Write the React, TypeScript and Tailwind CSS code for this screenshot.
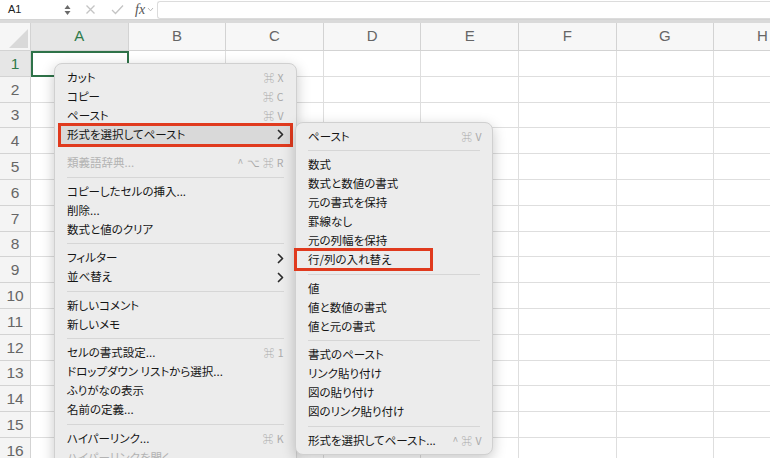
import React from "react";

type Entry =
  | { kind: "item"; label: string; shortcut?: string; arrow?: boolean; disabled?: boolean; active?: boolean }
  | { kind: "sep"; line?: boolean };

const COLS = ["A", "B", "C", "D", "E", "F", "G", "H"];
const ROWS = Array.from({ length: 17 }, (_, i) => i + 1);

const mainMenu: Entry[] = [
  { kind: "item", label: "カット", shortcut: "⌘ X" },
  { kind: "item", label: "コピー", shortcut: "⌘ C" },
  { kind: "item", label: "ペースト", shortcut: "⌘ V" },
  { kind: "item", label: "形式を選択してペースト", arrow: true, active: true },
  { kind: "sep", line: false },
  { kind: "item", label: "類義語辞典...", shortcut: "^ ⌥ ⌘ R", disabled: true },
  { kind: "sep" },
  { kind: "item", label: "コピーしたセルの挿入..." },
  { kind: "item", label: "削除..." },
  { kind: "item", label: "数式と値のクリア" },
  { kind: "sep" },
  { kind: "item", label: "フィルター", arrow: true },
  { kind: "item", label: "並べ替え", arrow: true },
  { kind: "sep" },
  { kind: "item", label: "新しいコメント" },
  { kind: "item", label: "新しいメモ" },
  { kind: "sep" },
  { kind: "item", label: "セルの書式設定...", shortcut: "⌘ 1" },
  { kind: "item", label: "ドロップダウン リストから選択..." },
  { kind: "item", label: "ふりがなの表示" },
  { kind: "item", label: "名前の定義..." },
  { kind: "sep" },
  { kind: "item", label: "ハイパーリンク...", shortcut: "⌘ K" },
  { kind: "item", label: "ハイパーリンクを開く", disabled: true },
];

const pasteMenu: Entry[] = [
  { kind: "item", label: "ペースト", shortcut: "⌘ V" },
  { kind: "sep" },
  { kind: "item", label: "数式" },
  { kind: "item", label: "数式と数値の書式" },
  { kind: "item", label: "元の書式を保持" },
  { kind: "item", label: "罫線なし" },
  { kind: "item", label: "元の列幅を保持" },
  { kind: "item", label: "行/列の入れ替え" },
  { kind: "sep" },
  { kind: "item", label: "値" },
  { kind: "item", label: "値と数値の書式" },
  { kind: "item", label: "値と元の書式" },
  { kind: "sep" },
  { kind: "item", label: "書式のペースト" },
  { kind: "item", label: "リンク貼り付け" },
  { kind: "item", label: "図の貼り付け" },
  { kind: "item", label: "図のリンク貼り付け" },
  { kind: "sep" },
  { kind: "item", label: "形式を選択してペースト...", shortcut: "^ ⌘ V" },
];

function Chevron() {
  return (
    <svg width="7" height="11" viewBox="0 0 7 11" className="shrink-0">
      <path d="M1.5 1.5 L5.5 5.5 L1.5 9.5" fill="none" stroke="#2a2a2a" strokeWidth="1.7" strokeLinecap="round" strokeLinejoin="round" />
    </svg>
  );
}

function MenuList({ entries, padR }: { entries: Entry[]; padR: string }) {
  return (
    <>
      {entries.map((e, i) =>
        e.kind === "sep" ? (
          <div key={i} className="flex h-[9.5px] items-center px-3">
            {e.line !== false && <div className="h-px w-full bg-[#d6d6d6]" />}
          </div>
        ) : (
          <div
            key={i}
            className={`mx-[3px] flex h-[19px] items-center justify-between rounded-[4px] pl-[9px] ${padR} ${
              e.active ? "bg-[#d9d9d9]" : ""
            }`}
          >
            <span className={e.disabled ? "text-[#b3b3b3]" : "text-[#151515]"}>{e.label}</span>
            {e.shortcut && <span className="text-[10.5px] tracking-[0.5px] text-[#aaaaaa]">{e.shortcut}</span>}
            {e.arrow && <Chevron />}
          </div>
        )
      )}
    </>
  );
}

export default function App() {
  return (
    <div className="relative h-[458px] w-[770px] overflow-hidden bg-white font-['Noto_Sans_CJK_JP','Liberation_Sans',sans-serif]">
      {/* formula bar */}
      <div className="flex h-[20px] items-center border-b border-[#d4d4d4] bg-white">
        <div className="flex h-full w-[76px] items-center justify-between pl-[8px] pr-[5px]">
          <span className="font-['Liberation_Sans',sans-serif] text-[11px] text-[#222]">A1</span>
          <svg width="7" height="12" viewBox="0 0 7 12">
            <path d="M3.5 1 L6.5 5 L0.5 5 Z" fill="#6a6a6a" />
            <path d="M3.5 11 L6.5 7 L0.5 7 Z" fill="#6a6a6a" />
          </svg>
        </div>
        <div className="flex h-full items-center pl-[9px]">
          <svg width="11" height="11" viewBox="0 0 11 11">
            <path d="M1.5 1.5 L9.5 9.5 M9.5 1.5 L1.5 9.5" stroke="#c4c4c4" strokeWidth="1.3" />
          </svg>
          <svg width="13" height="11" viewBox="0 0 13 11" className="ml-[15px]">
            <path d="M1 6 L4.5 9.5 L12 1.5" fill="none" stroke="#c4c4c4" strokeWidth="1.3" />
          </svg>
          <div className="ml-[11px] flex items-center gap-[2px]">
            <span className="font-['Liberation_Serif',serif] text-[14px] italic text-[#555]">fx</span>
            <svg width="7" height="5" viewBox="0 0 7 5">
              <path d="M1 1 L3.5 3.8 L6 1" fill="none" stroke="#bbbbbb" strokeWidth="1" />
            </svg>
          </div>
        </div>
        <div className="ml-[3px] h-[18px] flex-1 rounded-l-[3px] border border-r-0 border-[#dcdcdc] bg-white" />
      </div>
      <div className="h-[3px] bg-[#dadada]" />

      {/* grid */}
      <div className="grid grid-cols-[31px_repeat(8,97.6px)] grid-rows-[28px_repeat(17,25.8px)] font-['Liberation_Sans',sans-serif]">
        <div className="relative border-b border-r border-[#d3d3d3] bg-[#f6f6f6]">
          <svg width="30" height="27" viewBox="0 0 30 27" className="absolute inset-0">
            <path d="M28 6 L28 25 L9 25 Z" fill="#d9d9d9" />
          </svg>
        </div>
        {COLS.map((c) => (
          <div
            key={c}
            className={`flex items-center justify-center border-b border-r border-[#d3d3d3] text-[15px] ${
              c === "A" ? "bg-[#e6e6e6] text-[#2f7a4a]" : "bg-[#f7f7f7] text-[#666]"
            }`}
          >
            {c}
          </div>
        ))}
        {ROWS.map((r) => (
          <React.Fragment key={r}>
            <div
              className={`flex items-center justify-center border-b border-r border-[#d3d3d3] text-[15.5px] ${
                r === 1 ? "bg-[#e6e6e6] text-[#2f7a4a]" : "bg-[#f4f4f4] text-[#666]"
              }`}
            >
              {r}
            </div>
            {COLS.map((c) => (
              <div key={c} className="border-b border-r border-[#dedede]" />
            ))}
          </React.Fragment>
        ))}
      </div>

      {/* active cell */}
      <div className="absolute left-[31px] top-[51px] h-[26px] w-[98px] border-2 border-[#2e7248]" />

      {/* context menu */}
      <div className="absolute left-[54px] top-[63px] w-[243px] rounded-[8px] border border-[#d0d0d0] bg-[#ececec] pt-[4px] pb-[6px] text-[11.5px] [font-feature-settings:'palt'] shadow-[0_4px_14px_rgba(0,0,0,0.22)]">
        <MenuList entries={mainMenu} padR="pr-[9px]" />
        <div className="absolute left-[3px] top-[59px] h-[24px] w-[235px] border-[3px] border-[#e03a1e]" />
      </div>

      {/* paste special submenu */}
      <div className="absolute left-[295px] top-[122px] w-[198px] rounded-[8px] border border-[#d0d0d0] bg-[#ececec] pt-[4px] pb-[4px] text-[11.5px] [font-feature-settings:'palt'] shadow-[0_4px_14px_rgba(0,0,0,0.22)]">
        <MenuList entries={pasteMenu} padR="pr-[7px]" />
        <div className="absolute left-[-2px] top-[125px] h-[23px] w-[139px] border-[3px] border-[#e03a1e]" />
      </div>
    </div>
  );
}
